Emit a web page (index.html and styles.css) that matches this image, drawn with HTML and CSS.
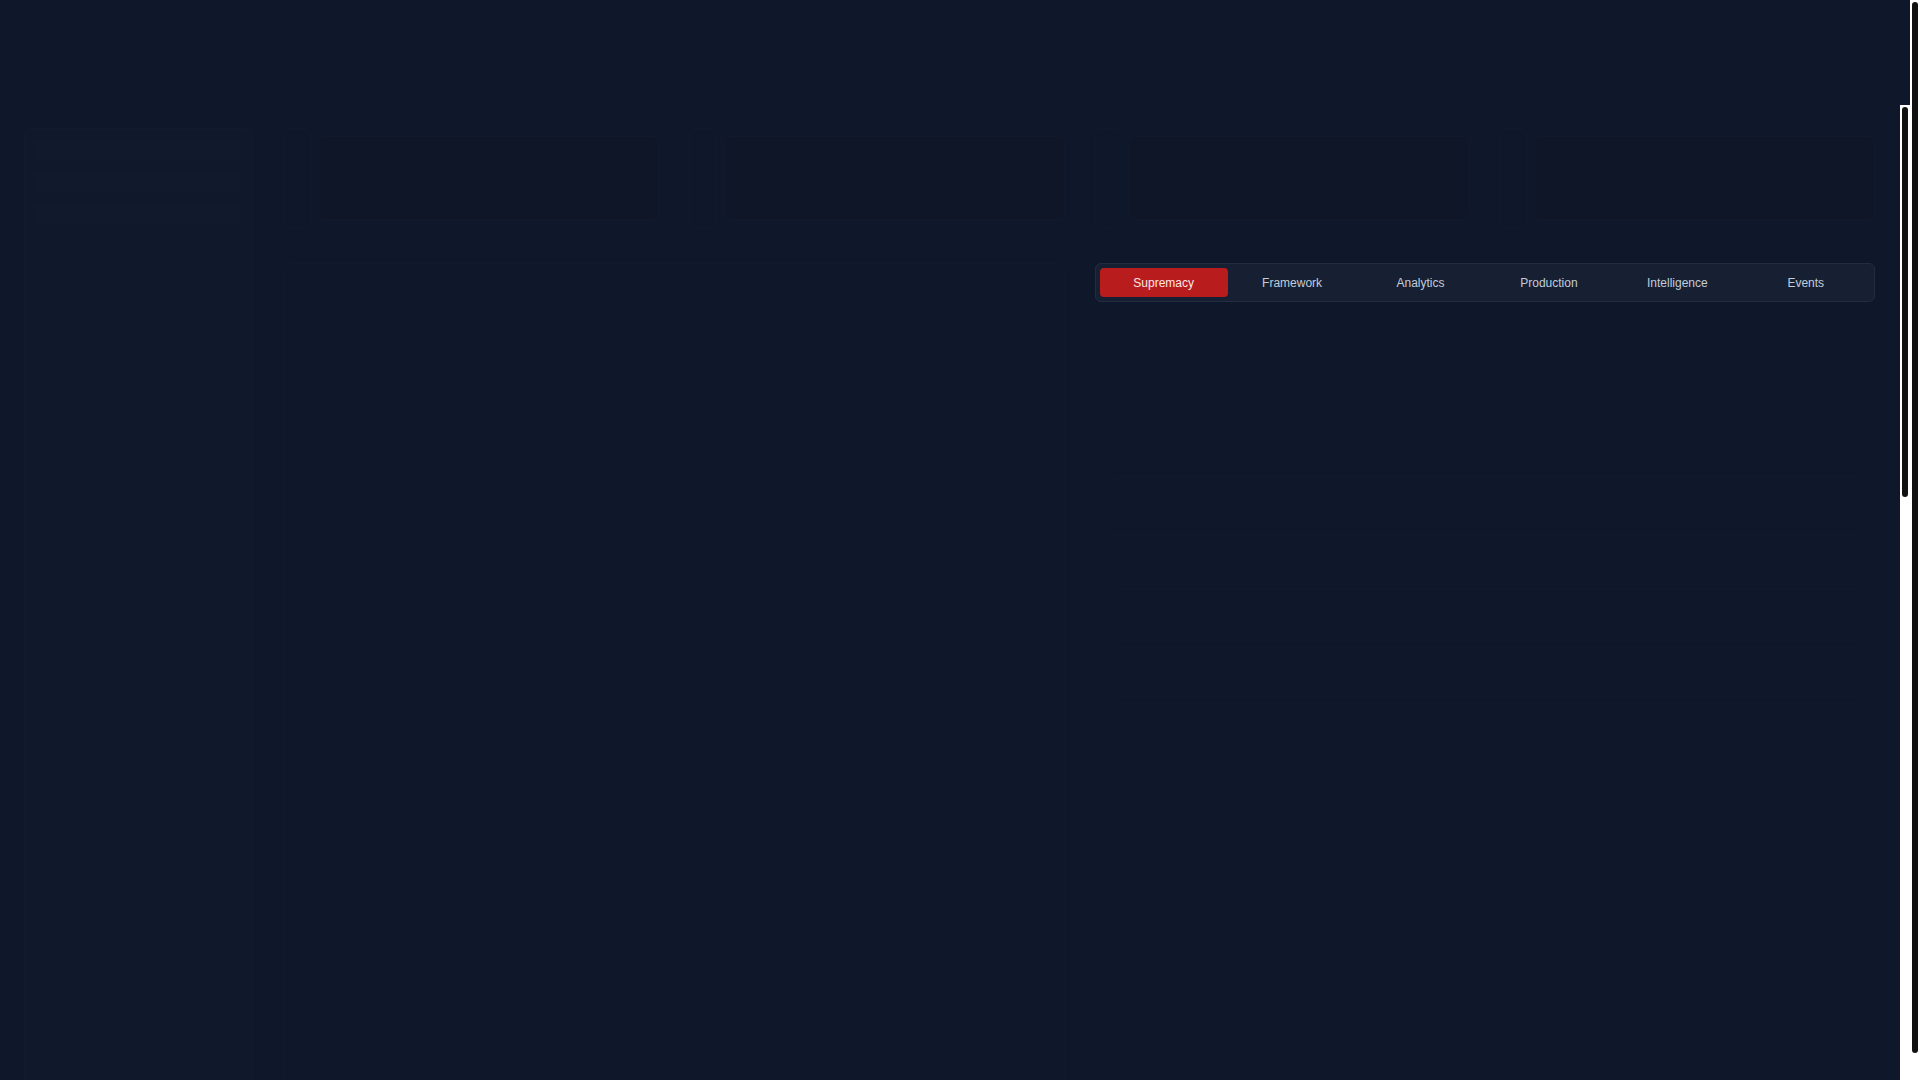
FILE: index.html
```html
<!DOCTYPE html>
<html lang="en">
<head>
<meta charset="utf-8">
<title>Dashboard</title>
<link rel="stylesheet" href="styles.css">
</head>
<body>
<header class="topbar"></header>
<div class="scroller">
  <div class="layout">
    <aside class="sidebar">
      <div class="side-line"></div>
      <div class="side-line"></div>
      <div class="side-line"></div>
    </aside>
    <main class="main">
      <section class="stats">
        <div class="stat"><div class="stat-icon"></div><div class="stat-body"></div></div>
        <div class="stat"><div class="stat-icon"></div><div class="stat-body"></div></div>
        <div class="stat"><div class="stat-icon"></div><div class="stat-body"></div></div>
        <div class="stat"><div class="stat-icon"></div><div class="stat-body"></div></div>
      </section>
      <section class="columns">
        <div class="panel-left"></div>
        <div class="panel-right">
          <nav class="tabs">
            <button class="tab active">Supremacy</button>
            <button class="tab">Framework</button>
            <button class="tab">Analytics</button>
            <button class="tab">Production</button>
            <button class="tab">Intelligence</button>
            <button class="tab">Events</button>
          </nav>
          <div class="tab-content">
            <div class="row tall"></div>
            <div class="row"></div>
            <div class="row"></div>
            <div class="row"></div>
            <div class="row"></div>
          </div>
        </div>
      </section>
    </main>
  </div>
</div>
<div class="vscroll vscroll-page"><div class="thumb"></div></div>
<div class="vscroll vscroll-inner"><div class="thumb"></div></div>
</body>
</html>
```

FILE: styles.css
```css
html, body {
  margin: 0;
  padding: 0;
}

html {
  overflow: hidden;
}

body {
  background: #0f172a;
  font-family: "Liberation Sans", Arial, sans-serif;
  color: #cbd5e1;
  padding-right: 10px;
  height: 1080px;
  box-sizing: border-box;
  overflow: hidden;
}

.topbar {
  height: 105px;
  border-bottom: 1px solid rgba(255, 255, 255, 0.006);
  box-sizing: border-box;
}

.scroller {
  height: 975px;
  overflow: hidden;
  padding-right: 10px;
}

.layout {
  display: grid;
  grid-template-columns: 228px 1fr;
  gap: 32px;
  padding: 23px 25px 0 24px;
  height: 2538px;
  box-sizing: border-box;
}

.sidebar {
  border: 1px solid rgba(255, 255, 255, 0.012);
  border-radius: 8px;
  background: rgba(255, 255, 255, 0.006);
  display: flex;
  flex-direction: column;
  gap: 12px;
  padding: 10px;
}

.side-line {
  height: 20px;
  border-radius: 4px;
  background: rgba(255, 255, 255, 0.008);
}

.main {
  display: flex;
  flex-direction: column;
  gap: 35px;
}

.stats {
  display: grid;
  grid-template-columns: repeat(4, 1fr);
  gap: 30px;
  height: 100px;
}

.stat {
  display: flex;
  gap: 6px;
  align-items: stretch;
}

.stat-icon {
  width: 26px;
  border: 1px solid rgba(255, 255, 255, 0.012);
  border-radius: 6px;
}

.stat-body {
  flex: 1;
  margin: 8px 0;
  border: 1px solid rgba(255, 255, 255, 0.012);
  border-radius: 6px;
  background: rgba(0, 0, 0, 0.03);
}

.columns {
  display: grid;
  grid-template-columns: 1fr 1fr;
  gap: 30px;
  align-items: start;
}

.panel-left {
  height: 2200px;
  border: 1px solid rgba(255, 255, 255, 0.01);
  border-radius: 8px;
  background: rgba(255, 255, 255, 0.004);
}

.panel-right {
  display: flex;
  flex-direction: column;
  gap: 20px;
}

.tabs {
  display: grid;
  grid-template-columns: repeat(6, 1fr);
  padding: 4px;
  background: #172032;
  border: 1px solid #222d3f;
  border-radius: 6px;
}

.tab {
  height: 29px;
  border: none;
  border-radius: 4px;
  background: transparent;
  color: #c3ccd8;
  font-family: "Liberation Sans", Arial, sans-serif;
  font-size: 12px;
  padding: 0;
  cursor: pointer;
}

.tab.active {
  background: #b91c1c;
  color: #fde6e6;
}

.tab-content {
  display: flex;
  flex-direction: column;
  gap: 14px;
  padding: 0 18px;
}

.row {
  height: 42px;
  border-bottom: 1px solid rgba(0, 0, 0, 0.06);
}

.row.tall {
  height: 150px;
}

/* scrollbar overlays */
.vscroll {
  position: fixed;
  width: 10px;
  background: #ffffff;
}

.vscroll-page {
  top: 0;
  right: 0;
  bottom: 0;
}

.vscroll-inner {
  top: 105px;
  right: 10px;
  bottom: 0;
}

.thumb {
  position: absolute;
  left: 2px;
  right: 2px;
  top: 2px;
  background: #111111;
  border-radius: 3px;
}

.vscroll-page .thumb {
  height: 1051px;
}

.vscroll-inner .thumb {
  height: 390px;
}
```
